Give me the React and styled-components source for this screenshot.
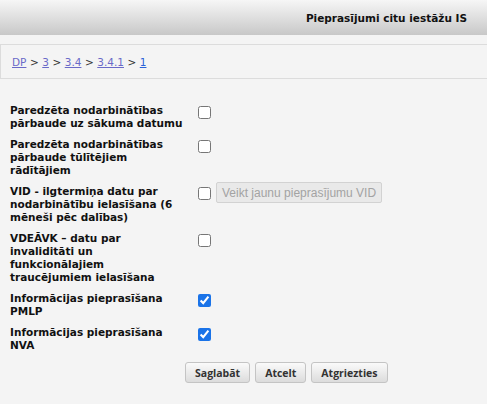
import styled, { createGlobalStyle } from 'styled-components'

const GlobalStyle = createGlobalStyle`
    html, body {
        margin: 0;
        padding: 0;
        background: #f4f4f4;
    }
    body {
        font-family: "DejaVu Sans", Verdana, sans-serif;
        color: #111;
    }
`;

const Page = styled.div`
    width: 487px;
    height: 404px;
    overflow: hidden;
    background: #f4f4f4;
`;

// top bar with page title
const Header = styled.div`
    height: 35px;
    display: flex;
    align-items: center;
    justify-content: flex-end;
    padding-right: 20px;
    background: linear-gradient(#f6f6f6, #c8c8c8);
`;

const Title = styled.h1`
    margin: 0;
    font-size: 10.5px;
    font-weight: bold;
    color: #111;
`;

const Crumbs = styled.div`
    margin-top: 9px;
    height: 33px;
    display: flex;
    align-items: center;
    padding-left: 11px;
    border-top: 1px solid #dcdcdc;
    border-bottom: 1px solid #dcdcdc;
    border-left: 1px solid #dcdcdc;
    font-size: 10.5px;
    color: #333;
`;

const Crumb = styled.a`
    color: ${props => props.current ? '#2b63d9' : '#6a6ac8'};
    text-decoration: underline;
`;

const Sep = styled.span`
    margin: 0 3.5px;
`;

const Form = styled.div`
    padding: 21px 0 0 10px;
`;

const Row = styled.div`
    display: flex;
    align-items: flex-start;
    padding: 4px 0;
`;

const Label = styled.div`
    width: 176px;
    margin-right: 6px;
    font-size: 10.5px;
    font-weight: bold;
    line-height: 13px;
    color: #111;
`;

const Value = styled.div`
    display: flex;
    align-items: flex-start;
    gap: 5px;
`;

const Check = styled.input.attrs({ type: 'checkbox' })`
    width: 13px;
    height: 13px;
    margin: 2px 0 0 6px;
    accent-color: #1a73e8;
`;

const GhostButton = styled.button`
    height: 21px;
    padding: 0 5px;
    font-family: "Liberation Sans", Arial, sans-serif;
    font-size: 12px;
    color: #a3a3a3;
    background: #e9e9e9;
    border: 1px solid #d2d2d2;
    border-radius: 2px;
    margin-top: -3px;
`;

const Actions = styled.div`
    display: flex;
    gap: 5px;
    padding: 6px 0 0 185px;
`;

const Button = styled.button`
    height: 21px;
    padding: 0 9px;
    font-family: "Open Sans", sans-serif;
    font-size: 10.5px;
    font-weight: bold;
    color: #333;
    background: linear-gradient(#fafafa, #dcdcdc);
    border: 1px solid #c4c4c4;
    border-radius: 3px;
`;

const rows = [
    { label: 'Paredzēta nodarbinātības pārbaude uz sākuma datumu' },
    { label: 'Paredzēta nodarbinātības pārbaude tūlītējiem rādītājiem' },
    { label: 'VID - ilgtermiņa datu par nodarbinātību ielasīšana (6 mēneši pēc dalības)', action: 'Veikt jaunu pieprasījumu VID' },
    { label: 'VDEĀVK – datu par invaliditāti un funkcionālajiem traucējumiem ielasīšana' },
    { label: 'Informācijas pieprasīšana PMLP', checked: true },
    { label: 'Informācijas pieprasīšana NVA', checked: true },
];

const App = () => {
  return (
    <Page>
        <GlobalStyle/>
        <Header>
            <Title>Pieprasījumi citu iestāžu IS</Title>
        </Header>
        <Crumbs>
            <Crumb href="#">DP</Crumb><Sep>&gt;</Sep>
            <Crumb href="#">3</Crumb><Sep>&gt;</Sep>
            <Crumb href="#">3.4</Crumb><Sep>&gt;</Sep>
            <Crumb href="#">3.4.1</Crumb><Sep>&gt;</Sep>
            <Crumb href="#" current>1</Crumb>
        </Crumbs>
        <Form>
            {rows.map((r, i) => (
                <Row key={i}>
                    <Label>{r.label}</Label>
                    <Value>
                        <Check defaultChecked={r.checked} />
                        {r.action && <GhostButton disabled>{r.action}</GhostButton>}
                    </Value>
                </Row>
            ))}
        </Form>
        <Actions>
            <Button>Saglabāt</Button>
            <Button>Atcelt</Button>
            <Button>Atgriezties</Button>
        </Actions>
    </Page>
  )
}

export default App
